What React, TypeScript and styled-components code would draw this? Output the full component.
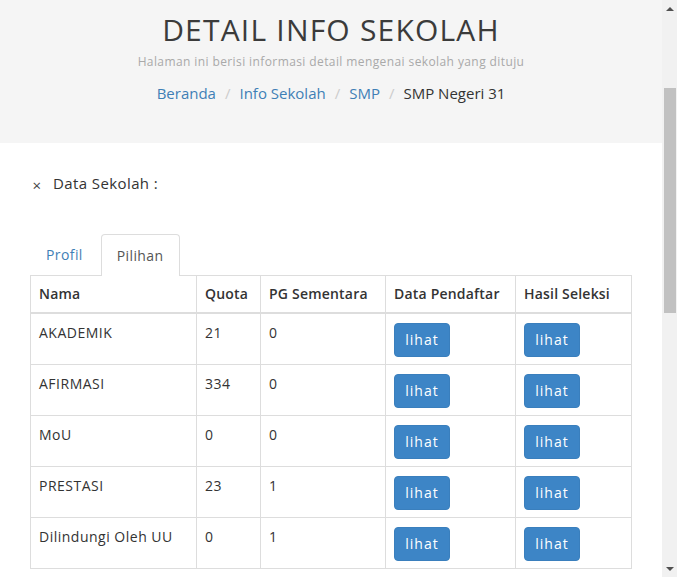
import styled, { createGlobalStyle } from "styled-components";

const GlobalStyle = createGlobalStyle`
  html, body {
    margin: 0;
    padding: 0;
    height: 100%;
    overflow: hidden;
  }
  body {
    font-family: "Open Sans", "Liberation Sans", sans-serif;
    color: #333;
    background: #fff;
  }
`;

const Screen = styled.div`
  display: flex;
  height: 577px;
  width: 677px;
`;

const Page = styled.div`
  flex: 1;
  min-width: 0;
`;

const Scrollbar = styled.div`
  width: 15px;
  background: #f1f1f1;
  display: flex;
  flex-direction: column;
  align-items: center;
`;

const Arrow = styled.div<{ $down?: boolean }>`
  height: 17px;
  width: 15px;
  display: flex;
  align-items: center;
  justify-content: center;
  &::before {
    content: "";
    border-left: 4px solid transparent;
    border-right: 4px solid transparent;
    ${(p) =>
      p.$down
        ? "border-top: 4px solid #505050;"
        : "border-bottom: 4px solid #505050;"}
  }
`;

const Track = styled.div`
  flex: 1;
  width: 100%;
  padding-top: 71px;
  display: flex;
  justify-content: center;
`;

const Thumb = styled.div`
  width: 12px;
  height: 225px;
  background: #c1c1c1;
`;

const Hero = styled.header`
  background: #f5f5f5;
  height: 143px;
  padding-top: 12px;
  box-sizing: border-box;
  text-align: center;
`;

const Title = styled.h1`
  margin: 0;
  font-size: 30px;
  font-weight: 400;
  color: #3b3b3b;
  letter-spacing: 1.2px;
  line-height: 36px;
`;

const Subtitle = styled.p`
  margin: 5px 0 0;
  font-size: 12px;
  color: #a9a9a9;
  line-height: 18px;
  letter-spacing: 0.4px;
`;

const Crumbs = styled.nav`
  margin-top: 12px;
  display: flex;
  justify-content: center;
  align-items: center;
  font-size: 15px;
  line-height: 20px;
`;

const Crumb = styled.span<{ $active?: boolean }>`
  color: ${(p) => (p.$active ? "#333" : "#3f7fb6")};
`;

const Sep = styled.span`
  color: #ccc;
  padding: 0 9px;
`;

const Content = styled.main`
  padding: 0 31px 0 30px;
`;

const SectionHead = styled.div`
  margin-top: 30px;
  display: flex;
  align-items: center;
  gap: 9px;
  font-size: 15px;
  height: 20px;
  letter-spacing: 0.4px;
`;

const Close = styled.span`
  font-size: 15px;
  color: #444;
  width: 14px;
  text-align: center;
  margin-top: 4px;
`;

const Tabs = styled.div`
  margin-top: 40px;
  display: flex;
  align-items: flex-end;
  height: 42px;
`;

const Tab = styled.div<{ $active?: boolean }>`
  height: 42px;
  box-sizing: border-box;
  padding: 0 15px;
  display: flex;
  align-items: center;
  font-size: 14px;
  letter-spacing: 0.4px;
  margin-right: 2px;
  border: 1px solid ${(p) => (p.$active ? "#ddd" : "transparent")};
  border-bottom: 0;
  border-radius: 4px 4px 0 0;
  background: #fff;
  color: ${(p) => (p.$active ? "#555" : "#3f7fb6")};
  margin-bottom: ${(p) => (p.$active ? "-1px" : "0")};
  position: relative;
`;

const Table = styled.table`
  width: 601px;
  border-collapse: collapse;
  font-size: 14px;
  border: 1px solid #ddd;
  table-layout: fixed;
`;

const Th = styled.th<{ $w: number }>`
  width: ${(p) => p.$w}px;
  text-align: left;
  font-weight: 600;
  color: #333;
  padding: 8px;
  height: 37px;
  box-sizing: border-box;
  border: 1px solid #ddd;
  border-bottom: 2px solid #ddd;
  vertical-align: middle;
  font-size: 14px;
  letter-spacing: 0.2px;
`;

const Td = styled.td`
  padding: 9px 8px 7px;
  border: 1px solid #ddd;
  vertical-align: top;
  height: 51px;
  box-sizing: border-box;
  line-height: 20px;
  color: #333;
  letter-spacing: 0.5px;
`;

const Button = styled.button`
  font-family: inherit;
  font-size: 14px;
  letter-spacing: 1px;
  color: #fff;
  background: #3d85c6;
  border: 1px solid #3a7fbd;
  border-radius: 4px;
  width: 56px;
  height: 34px;
  padding: 0;
  cursor: pointer;
`;

const columns = [
  { label: "Nama", w: 166 },
  { label: "Quota", w: 64 },
  { label: "PG Sementara", w: 125 },
  { label: "Data Pendaftar", w: 130 },
  { label: "Hasil Seleksi", w: 116 },
];

const rows = [
  { nama: "AKADEMIK", quota: 21, pg: 0 },
  { nama: "AFIRMASI", quota: 334, pg: 0 },
  { nama: "MoU", quota: 0, pg: 0 },
  { nama: "PRESTASI", quota: 23, pg: 1 },
  { nama: "Dilindungi Oleh UU", quota: 0, pg: 1 },
];

export default function App() {
  return (
    <Screen>
      <GlobalStyle />
      <Page>
        <Hero>
          <Title>DETAIL INFO SEKOLAH</Title>
          <Subtitle>Halaman ini berisi informasi detail mengenai sekolah yang dituju</Subtitle>
          <Crumbs>
            <Crumb>Beranda</Crumb>
            <Sep>/</Sep>
            <Crumb>Info Sekolah</Crumb>
            <Sep>/</Sep>
            <Crumb>SMP</Crumb>
            <Sep>/</Sep>
            <Crumb $active>SMP Negeri 31</Crumb>
          </Crumbs>
        </Hero>
        <Content>
          <SectionHead>
            <Close>×</Close>
            <span>Data Sekolah :</span>
          </SectionHead>
          <Tabs>
            <Tab>Profil</Tab>
            <Tab $active>Pilihan</Tab>
          </Tabs>
          <Table>
            <thead>
              <tr>
                {columns.map((c) => (
                  <Th key={c.label} $w={c.w}>
                    {c.label}
                  </Th>
                ))}
              </tr>
            </thead>
            <tbody>
              {rows.map((r) => (
                <tr key={r.nama}>
                  <Td>{r.nama}</Td>
                  <Td>{r.quota}</Td>
                  <Td>{r.pg}</Td>
                  <Td>
                    <Button>lihat</Button>
                  </Td>
                  <Td>
                    <Button>lihat</Button>
                  </Td>
                </tr>
              ))}
            </tbody>
          </Table>
        </Content>
      </Page>
      <Scrollbar>
        <Arrow />
        <Track>
          <Thumb />
        </Track>
        <Arrow $down />
      </Scrollbar>
    </Screen>
  );
}
